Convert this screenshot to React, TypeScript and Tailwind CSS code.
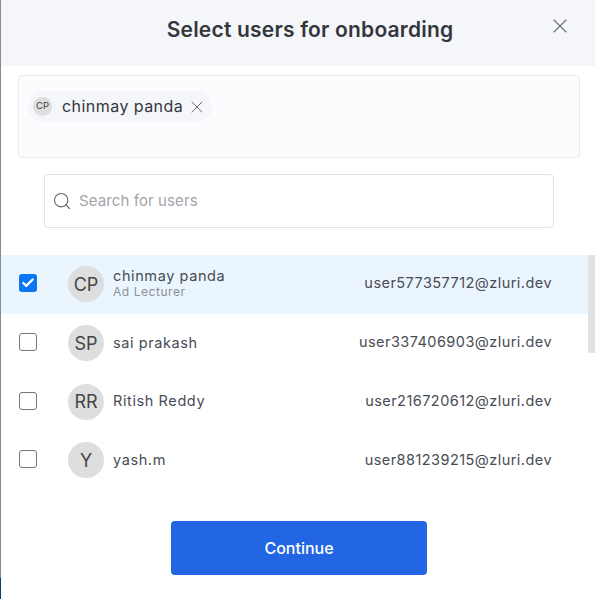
import React from 'react';
import { Check, Search, X } from 'lucide-react';

const users = [
  { initials: 'CP', name: 'chinmay panda', role: 'Ad Lecturer', email: 'user577357712@zluri.dev', selected: true },
  { initials: 'SP', name: 'sai prakash', email: 'user337406903@zluri.dev' },
  { initials: 'RR', name: 'Ritish Reddy', email: 'user216720612@zluri.dev' },
  { initials: 'Y', name: 'yash.m', email: 'user881239215@zluri.dev' },
];

function UserRow({ user }: { user: (typeof users)[number] }) {
  return (
    <div className={`flex h-[58.7px] items-center pl-[19px] pr-[43px] ${user.selected ? 'bg-[#ebf5fd]' : 'bg-white'}`}>
      {user.selected ? (
        <div className="mb-[2px] flex h-[18px] w-[18px] items-center justify-center rounded-[3px] bg-[#0b76f5]">
          <Check className="h-[14px] w-[14px] text-white" strokeWidth={4} />
        </div>
      ) : (
        <div className="mb-[2px] h-[18px] w-[18px] rounded-[3px] border border-[#767676] bg-white" />
      )}
      <div className="ml-[31px] flex h-9 w-9 items-center justify-center rounded-full bg-[#dedede] text-[18px] text-[#454545]">
        {user.initials}
      </div>
      <div className="mb-[2px] ml-[9px] flex flex-col">
        <span className="text-[14.5px] leading-[17px] tracking-[0.6px] text-[#484c55]">{user.name}</span>
        {user.role && <span className="text-[12px] leading-[15px] tracking-[0.55px] text-[#8c9099]">{user.role}</span>}
      </div>
      <span className="mb-[2px] ml-auto text-[14.5px] tracking-[0.45px] text-[#484c55]">{user.email}</span>
    </div>
  );
}

export default function App() {
  return (
    <div className="relative flex h-[599px] w-[595px] flex-col overflow-hidden bg-white font-['Inter',sans-serif]">
      <header className="relative flex h-[66px] shrink-0 items-center justify-center bg-[#f5f6f9] pb-[6px] pl-[25px]">
        <h1 className="text-[21px] font-semibold tracking-[0.2px] text-[#33363c]">Select users for onboarding</h1>
        <button className="absolute right-[23px] top-[14px] text-[#6b6f76]">
          <X className="h-[24px] w-[24px]" strokeWidth={1.1} />
        </button>
      </header>

      <div className="ml-[18px] mt-[9px] h-[83px] w-[562px] rounded-[4px] border border-[#e9ebef] bg-[#fbfcfe] px-[9px] pt-[15px]">
        <div className="inline-flex h-[31px] items-center rounded-full bg-[#f5f6f9] pl-[5px] pr-[5px]">
          <div className="flex h-[19px] w-[19px] items-center justify-center rounded-full bg-[#dedede] text-[9.5px] text-[#454545]">CP</div>
          <span className="mb-[2px] ml-[10px] text-[16px] tracking-[0.45px] text-[#33363c]">chinmay panda</span>
          <X className="ml-[4px] h-[20px] w-[20px] text-[#5f636a]" strokeWidth={1.1} />
        </div>
      </div>

      <div className="ml-[44px] mt-[16px] flex h-[54px] w-[510px] items-center rounded-[4px] border border-[#e1e3e8] bg-white pl-[7px]">
        <Search className="h-[20px] w-[20px] text-[#5f636a]" strokeWidth={1.3} />
        <span className="ml-[7px] text-[15px] tracking-[0.1px] text-[#a2a5ab]">Search for users</span>
      </div>

      <div className="relative mt-[27px]">
        {users.map((user) => (
          <UserRow key={user.email} user={user} />
        ))}
        <div className="absolute right-0 top-0 h-[98px] w-[7px] rounded-l-[3px] bg-[#e1e1e1]" />
      </div>

      <div className="mt-[31px] flex justify-center">
        <button className="ml-[3px] h-[54px] w-[256px] rounded-[4px] bg-[#2266e3] text-[16px] font-medium text-white">Continue</button>
      </div>

      {/* edge of the window behind the modal */}
      <div className="absolute left-0 top-0 h-[578px] w-px bg-[#8a8a8a]" />
      <div className="absolute bottom-0 left-0 h-[21px] w-px bg-[#0f3a70]" />
    </div>
  );
}
